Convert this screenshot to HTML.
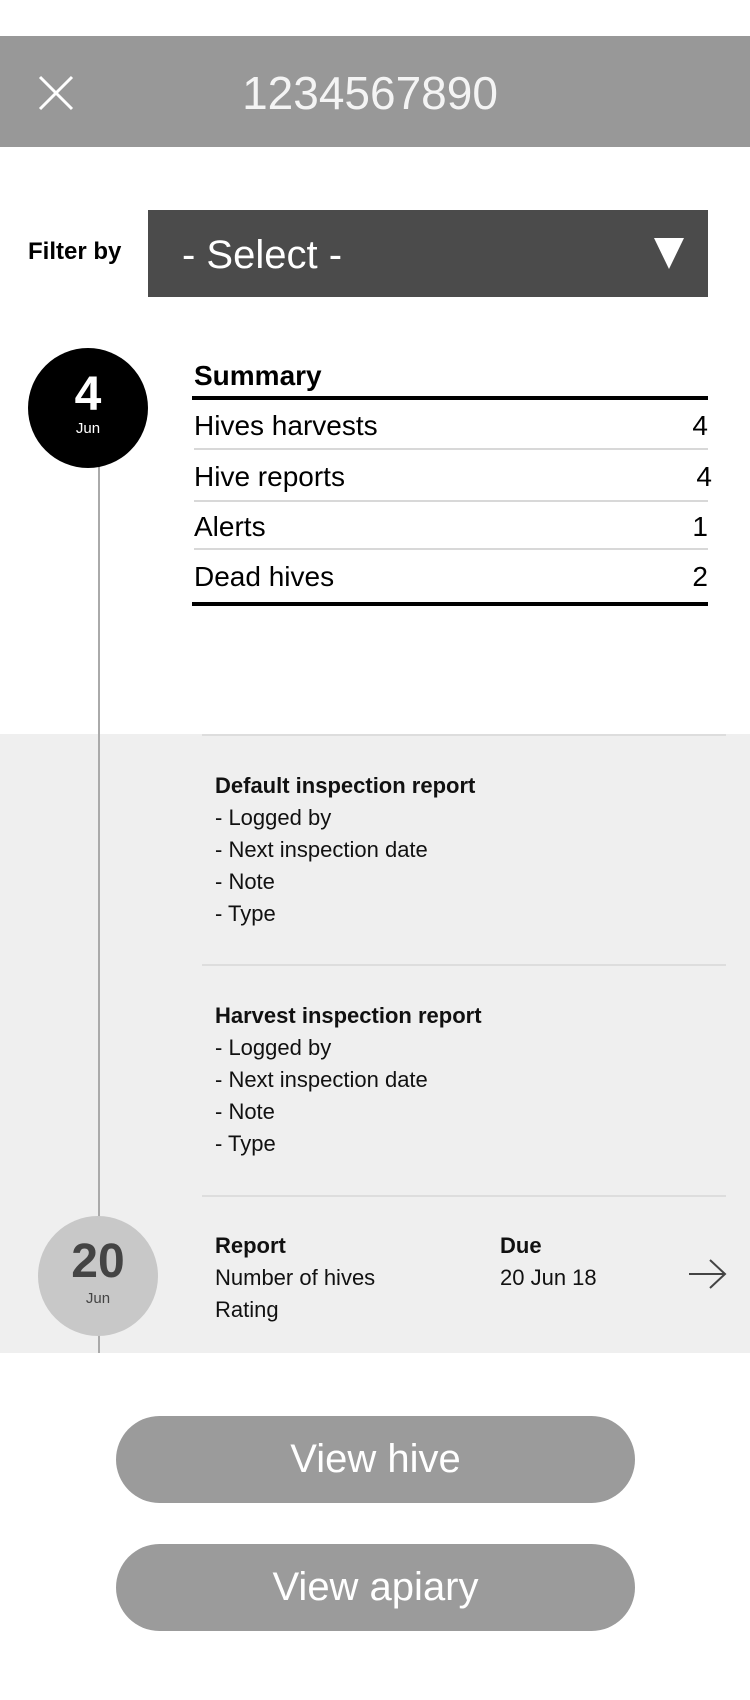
<!DOCTYPE html>
<html><head><meta charset="utf-8"><style>
*{margin:0;padding:0;box-sizing:border-box}
body{width:750px;height:1700px;background:#fff;font-family:"Liberation Sans",Arial,sans-serif;position:relative;overflow:hidden;color:#000}
.a{position:absolute}
.hdr{left:0;top:36px;width:750px;height:111px;background:#989898}
.title{left:0;width:740px;top:65px;text-align:center;font-size:46px;color:#f4f4f4;line-height:56px}
.sel{left:148px;top:210px;width:560px;height:87px;background:#4b4b4b}
.row{left:194px;width:514px;font-size:28px;line-height:34px;display:flex;justify-content:space-between}
.ln{left:194px;width:514px;height:2px;background:#d8d8d8}
.gray{left:0;top:734px;width:750px;height:619px;background:#efefef}
.sm{font-size:22px;line-height:32px;color:#111}
.btn{left:116px;width:519px;height:87px;border-radius:44px;background:#9b9b9b;color:#fff;font-size:40px;text-align:center;line-height:87px}
</style></head><body>
<div class="a hdr"></div>
<svg class="a" style="left:38px;top:75px" width="36" height="36"><path d="M2 2L34 34M34 2L2 34" stroke="#fff" stroke-width="3"/></svg>
<div class="a title">1234567890</div>
<div class="a" style="left:28px;top:237px;font-size:24px;font-weight:bold;line-height:30px">Filter by</div>
<div class="a sel"></div>
<div class="a" style="left:182px;top:230px;font-size:40px;color:#fff;line-height:50px">- Select -</div>
<svg class="a" style="left:654px;top:238px" width="30" height="31"><path d="M0 0H30L15 31Z" fill="#fff"/></svg>

<div class="a gray"></div>
<div class="a" style="left:98px;top:460px;width:2px;height:893px;background:#aaa"></div>
<div class="a" style="left:28px;top:348px;width:120px;height:120px;border-radius:50%;background:#000;color:#fff;text-align:center">
<div style="font-size:48px;font-weight:bold;line-height:50px;margin-top:22px">4</div>
<div style="font-size:15px;line-height:18px">Jun</div></div>

<div class="a" style="left:194px;top:359px;font-size:28px;font-weight:bold;line-height:34px">Summary</div>
<div class="a" style="left:192px;top:396px;width:516px;height:4px;background:#000"></div>
<div class="a row" style="top:409px"><span>Hives harvests</span><span>4</span></div>
<div class="a ln" style="top:448px"></div>
<div class="a row" style="top:460px"><span>Hive reports</span><span style="margin-right:-4px">4</span></div>
<div class="a ln" style="top:500px"></div>
<div class="a row" style="top:510px"><span>Alerts</span><span>1</span></div>
<div class="a ln" style="top:548px"></div>
<div class="a row" style="top:560px"><span>Dead hives</span><span>2</span></div>
<div class="a" style="left:192px;top:602px;width:516px;height:4px;background:#000"></div>

<div class="a" style="left:202px;top:734px;width:524px;height:2px;background:#ddd"></div>
<div class="a sm" style="left:215px;top:770px"><b>Default inspection report</b><br>- Logged by<br>- Next inspection date<br>- Note<br>- Type</div>
<div class="a" style="left:202px;top:964px;width:524px;height:2px;background:#ddd"></div>
<div class="a sm" style="left:215px;top:1000px"><b>Harvest inspection report</b><br>- Logged by<br>- Next inspection date<br>- Note<br>- Type</div>
<div class="a" style="left:202px;top:1195px;width:524px;height:2px;background:#ddd"></div>

<div class="a" style="left:38px;top:1216px;width:120px;height:120px;border-radius:50%;background:#c8c8c8;color:#444;text-align:center">
<div style="font-size:48px;font-weight:bold;line-height:50px;margin-top:21px">20</div>
<div style="font-size:15px;line-height:18px;margin-top:3px">Jun</div></div>
<div class="a sm" style="left:215px;top:1230px"><b>Report</b><br>Number of hives<br>Rating</div>
<div class="a sm" style="left:500px;top:1230px"><b>Due</b><br>20 Jun 18</div>
<svg class="a" style="left:688px;top:1258px" width="40" height="32"><path d="M1 16H37M22 2L37 16L22 30" stroke="#444" stroke-width="2" fill="none"/></svg>

<div class="a btn" style="top:1416px">View hive</div>
<div class="a btn" style="top:1544px">View apiary</div>
</body></html>
